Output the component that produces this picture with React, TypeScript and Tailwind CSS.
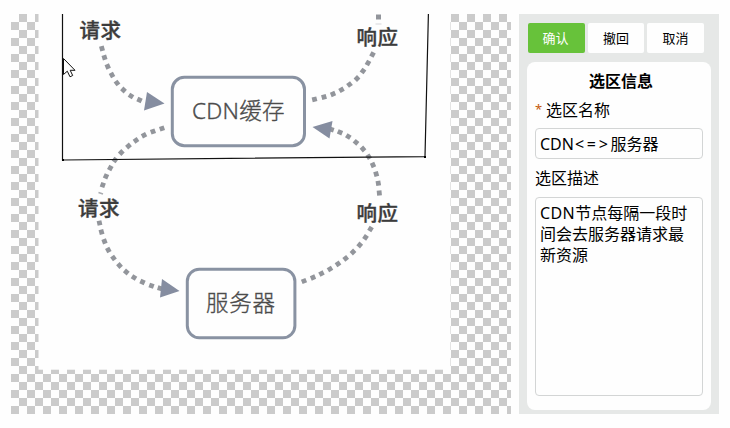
type Point = [number, number];

const dottedPaths: Point[][] = [
  [[102, 48.5], [104.5, 57.5], [107.7, 66.5], [112, 75], [117, 83], [123.5, 90], [131, 96], [139.5, 100]],
  [[162, 128.5], [153, 131.5], [144, 135.3], [136, 140.3], [128.5, 146], [121.3, 152.5], [115, 160], [110.3, 168], [106, 176.3], [102.8, 185]],
  [[99.5, 223], [101.5, 232], [104.5, 241.3], [108.3, 250], [113.5, 258], [119.5, 265.5], [126.3, 272], [134, 277.5], [142.5, 282], [151.5, 285.7], [160, 288.3]],
  [[372.5, 54.5], [368, 63], [363, 71], [357, 78.5], [349.5, 84.5], [341.5, 89.8], [333, 94], [324, 97], [314.5, 99.3]],
  [[379.3, 193], [378.3, 183.3], [376.2, 174], [373, 165], [368.7, 156.7], [363, 149], [356, 142.3], [348.3, 136.5], [340, 132.3], [331.5, 129.5]],
  [[370.5, 229], [365.5, 237.3], [359.7, 245], [353, 252], [345.7, 258.3], [338, 263.8], [330, 269], [321.5, 273.5], [313, 277.5], [304, 281]],
];

function Dots({ points }: { points: Point[] }) {
  return (
    <>
      {points.map(([x, y], i) => {
        const a = points[Math.max(0, i - 1)];
        const b = points[Math.min(points.length - 1, i + 1)];
        const angle = (Math.atan2(b[1] - a[1], b[0] - a[0]) * 180) / Math.PI;
        return (
          <rect key={i} x={x - 2.4} y={y - 2.4} width="4.8" height="4.8" fill="#92959b" transform={`rotate(${angle} ${x} ${y})`} />
        );
      })}
    </>
  );
}

function Diagram() {
  return (
    <svg className="block h-[400px] w-[500px] font-['Noto_Sans','Noto_Sans_CJK_SC',sans-serif]" viewBox="11 14 500 400">
      <rect x="38.5" y="14" width="412" height="355.7" fill="#fefefe" />
      {dottedPaths.map((points, i) => (
        <Dots key={i} points={points} />
      ))}
      <rect x="376" y="14.5" width="5" height="5" fill="#92959b" />
      <rect x="375.5" y="23.5" width="6" height="1" fill="#d5d6d9" />
      <path d="M98.5 192.5l4.5 1.5" stroke="#aaacb0" strokeWidth="1.5" />
      <g fill="#858da0">
        <path d="M147 92L164.5 103.5L144 110.5Z" />
        <path d="M162 279L179.5 291L160 297.5Z" />
        <path d="M312.5 127L332.5 121L329.5 138.5Z" />
      </g>
      <g fill="#fefefe" stroke="#8992a2" strokeWidth="3">
        <rect x="172.3" y="77.3" width="132.2" height="68.4" rx="12" />
        <rect x="187.3" y="269.2" width="107.6" height="68.6" rx="12" />
      </g>
      <g fill="#4c4c4c" stroke="#4c4c4c" strokeWidth="0.35" fontSize="22.5" fontWeight="300">
        <text x="192" y="118.5" textLength="92.5">CDN缓存</text>
        <text x="206" y="311" textLength="69">服务器</text>
      </g>
      <g fill="#3c3c3c" stroke="#3c3c3c" strokeWidth="0.35" fontSize="20.5" fontWeight="500">
        <text x="79.5" y="38" textLength="41.5">请求</text>
        <text x="78" y="215.5" textLength="41.5">请求</text>
        <text x="356.5" y="45" textLength="41.5">响应</text>
        <text x="356.5" y="220.5" textLength="41.5">响应</text>
      </g>
      <path d="M62.5 14V160L425 156.6L428.4 14" fill="none" stroke="#111" strokeWidth="1.2" />
      <path d="M62 159h2v2h-2zM424 156h2v2h-2z" fill="#000" />
      <path d="M63.5 58.5V74.5L67.3 71.2L70 76.8L72.7 75.5L70.2 70.3H75Z" fill="#fff" stroke="#111" strokeWidth="1" />
    </svg>
  );
}

export default function App() {
  return (
    <div className="flex h-[428px] w-[730px] gap-2 bg-[#fefefe] pt-[14px] pl-[11px] font-['Noto_Sans','Noto_Sans_CJK_SC',sans-serif] text-base text-black">
      <main className="h-[400px] w-[500px] overflow-hidden bg-[conic-gradient(#cbcbcb_25%,#fefefe_0_50%,#cbcbcb_0_75%,#fefefe_0)] bg-[length:16px_16px]">
        <Diagram />
      </main>
      <aside className="flex h-[400px] w-[200px] flex-col bg-[#e6e8e7] px-2 pt-[9px] pb-1">
        <div className="flex gap-[3px] pl-px text-[13px]">
          <button className="h-[30px] w-[57px] rounded-[2px] bg-[#67c23a] pt-0.5 pr-0.5 text-white">确认</button>
          <button className="h-[30px] w-[56px] rounded-[2px] bg-[#fefefe] pt-0.5">撤回</button>
          <button className="h-[30px] w-[57px] rounded-[2px] bg-[#fefefe] pt-0.5">取消</button>
        </div>
        <section className="mt-[9px] flex flex-1 flex-col rounded-lg bg-[#fefefe] px-2">
          <h2 className="mt-2 pl-1 text-center leading-[22px] font-bold">选区信息</h2>
          <label className="mt-2 flex h-[21px] gap-[3px] leading-[21px]">
            <span className="w-2 text-[13px] leading-[19px] text-[#c45a0a]">*</span>
            选区名称
          </label>
          <div
            role="textbox"
            className="mt-[7px] h-[31px] w-[168px] rounded border border-[#d3d5d5] px-1 leading-[30px] whitespace-nowrap"
          >
            CDN<span className="pl-px tracking-[2.7px]">&lt;=&gt;</span>服务器
          </div>
          <label className="mt-[9px] h-[21px] leading-[21px]">选区描述</label>
          <div
            role="textbox"
            aria-multiline="true"
            className="mt-2 h-[199px] w-[168px] rounded border border-[#d3d5d5] pt-[5px] pl-1 leading-[21px]"
          >
            <span className="tracking-[0.4px]">CDN</span>节点每隔一段时<br />
            间会去服务器请求最<br />
            新资源
          </div>
        </section>
      </aside>
    </div>
  );
}
